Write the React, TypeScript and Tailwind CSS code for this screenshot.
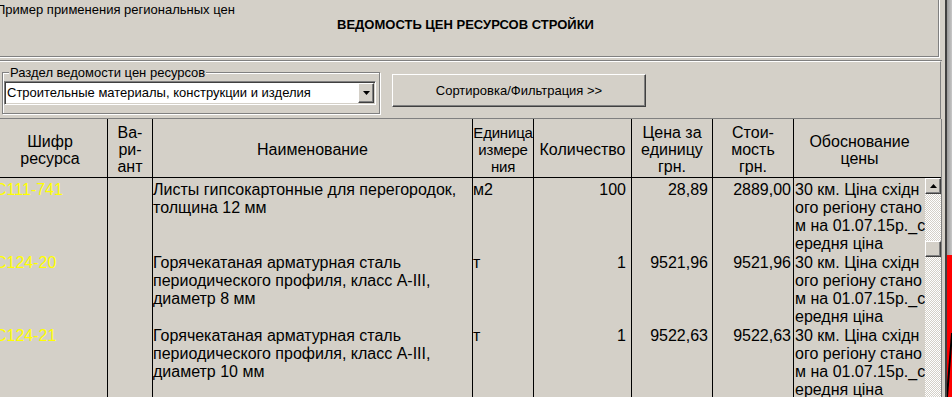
import React from 'react'

interface Row {
  code: string
  name: string[]
  unit: string
  qty: string
  price: string
  cost: string
}

const rows: Row[] = [
  {
    code: 'С111-741',
    name: ['Листы гипсокартонные для перегородок,', 'толщина 12 мм'],
    unit: 'м2',
    qty: '100',
    price: '28,89',
    cost: '2889,00',
  },
  {
    code: 'С124-20',
    name: ['Горячекатаная арматурная сталь', 'периодического профиля, класс А-III,', 'диаметр 8 мм'],
    unit: 'т',
    qty: '1',
    price: '9521,96',
    cost: '9521,96',
  },
  {
    code: 'С124-21',
    name: ['Горячекатаная арматурная сталь', 'периодического профиля, класс А-III,', 'диаметр 10 мм'],
    unit: 'т',
    qty: '1',
    price: '9522,63',
    cost: '9522,63',
  },
]

// price basis wraps mid-word in the original grid
const basis = ['30 км. Ціна східн', 'ого регіону стано', 'м на 01.07.15р._с', 'ередня ціна']

const Lines: React.FC<{ lines: string[] }> = ({ lines }) => (
  <>
    {lines.map((l, i) => (
      <div key={i} className="whitespace-nowrap">
        {l}
      </div>
    ))}
  </>
)

const raised =
  'border border-t-white border-l-white border-b-[#404040] border-r-[#404040] shadow-[inset_-1px_-1px_0_#808080]'

const App: React.FC = () => {
  return (
    <div className="w-[952px] h-[397px] overflow-hidden flex bg-[#d4d0c8] text-black font-['Liberation_Sans',Arial,sans-serif]">
      {/* main window */}
      <div className="w-[942px] flex flex-col">
        {/* header panel */}
        <div className="w-[940px] border-r border-b border-white">
          <div className="h-[57px] w-[939px] border-r border-b border-[#808080]">
            <div className="ml-[-4px] pt-[2px] text-[13px] leading-[15px] whitespace-nowrap">
              Пример применения региональных цен
            </div>
            <div className="pr-[7px] text-center text-[13px] leading-[15px] font-bold">
              ВЕДОМОСТЬ ЦЕН РЕСУРСОВ СТРОЙКИ
            </div>
          </div>
        </div>

        {/* filter panel */}
        <div className="mt-[2px] w-[942px] h-[59px] border-t border-[#808080]">
          <div className="h-[58px] border-t border-white border-r border-b border-r-[#808080] border-b-[#808080] w-[941px] flex items-start">
            {/* group box */}
            <div className="ml-[2px] mt-[10px] w-[378px] h-[42px] border border-[#808080] shadow-[inset_1px_1px_0_#fff,1px_1px_0_#fff] text-[13px] leading-[15px]">
              <div className="block w-fit mt-[-8px] ml-[6px] px-[1px] h-[15px] bg-[#d4d0c8] whitespace-nowrap">
                Раздел ведомости цен ресурсов
              </div>
              <div className="ml-[1px] mt-[1px] w-[372px] h-[24px] flex border border-t-[#808080] border-l-[#808080] border-b-white border-r-white shadow-[inset_1px_1px_0_#404040,inset_-1px_-1px_0_#d4d0c8] p-[1px]">
                <div className="flex-1 bg-white pl-[1px] pt-[2px] whitespace-nowrap overflow-hidden">
                  Строительные материалы, конструкции и изделия
                </div>
                <div className={`w-[16px] h-[20px] flex items-center justify-center bg-[#d4d0c8] ${raised}`}>
                  <svg width="7" height="4" viewBox="0 0 7 4">
                    <path d="M0 0h7L3.5 4z" fill="#000" />
                  </svg>
                </div>
              </div>
            </div>
            <div
              className={`ml-[12px] mt-[12px] w-[254px] h-[33px] flex items-center justify-center text-[13px] leading-[15px] ${raised}`}
            >
              Сортировка/Фильтрация &gt;&gt;
            </div>
          </div>
        </div>

        {/* grid */}
        <div className="flex-1 overflow-hidden">
          <div className="ml-[-8px] w-[950px] h-full border-r border-[#808080] flex flex-col">
            <div className="h-[61px] flex border-b border-black text-[16px] leading-[17px] text-center">
              <div className="w-[116px] border-r border-black flex flex-col items-center justify-center pt-[3px] pl-[1px]">
                <Lines lines={['Шифр', 'ресурса']} />
              </div>
              <div className="w-[45px] border-r border-black flex flex-col items-center justify-center pt-[3px]">
                <Lines lines={['Ва-', 'ри-', 'ант']} />
              </div>
              <div className="w-[320px] border-r border-black flex items-center justify-center pt-[3px]">
                Наименование
              </div>
              <div className="w-[61px] border-r border-black flex flex-col items-center justify-center pt-[3px] text-[15px] tracking-[-0.2px]">
                <Lines lines={['Единица', 'измере', 'ния']} />
              </div>
              <div className="w-[98px] border-r border-black flex items-center justify-center pt-[3px]">
                Количество
              </div>
              <div className="w-[81px] border-r border-black flex flex-col items-center justify-center pt-[3px]">
                <Lines lines={['Цена за', 'единицу', 'грн.']} />
              </div>
              <div className="w-[81px] border-r border-black flex flex-col items-center justify-center pt-[3px]">
                <Lines lines={['Стои-', 'мость', 'грн.']} />
              </div>
              <div className="flex-1 flex flex-col items-center justify-center pt-[3px] pr-[16px]">
                <Lines lines={['Обоснование', 'цены']} />
              </div>
            </div>

            <div className="flex-1 flex">
              <div className="w-[933px] text-[16px] leading-[18px]">
                {rows.map((r) => (
                  <div key={r.code} className="h-[73px] flex">
                    <div className="w-[116px] border-r border-black pt-[3px] pl-[3px] text-[#ffff00] whitespace-nowrap">
                      {r.code}
                    </div>
                    <div className="w-[45px] border-r border-black" />
                    <div className="w-[320px] border-r border-black pt-[3px]">
                      <Lines lines={r.name} />
                    </div>
                    <div className="w-[61px] border-r border-black pt-[3px]">{r.unit}</div>
                    <div className="w-[98px] border-r border-black pt-[3px] pr-[5px] text-right">{r.qty}</div>
                    <div className="w-[81px] border-r border-black pt-[3px] pr-[4px] text-right">{r.price}</div>
                    <div className="w-[81px] border-r border-black pt-[3px] pr-[2px] text-right">{r.cost}</div>
                    <div className="w-[131px] pt-[3px] pl-[1px]">
                      <Lines lines={basis} />
                    </div>
                  </div>
                ))}
              </div>

              {/* vertical scrollbar */}
              <div className="w-[16px] flex flex-col">
                <div className={`h-[16px] flex items-center justify-center bg-[#d4d0c8] ${raised}`}>
                  <svg width="7" height="4" viewBox="0 0 7 4">
                    <path d="M3.5 0L7 4H0z" fill="#000" />
                  </svg>
                </div>
                <div className="h-[47px] bg-[repeating-conic-gradient(#d4d0c8_0_25%,#ffffff_0_50%)] bg-[length:2px_2px]" />
                <div className={`h-[16px] bg-[#d4d0c8] ${raised}`} />
                <div className="flex-1 bg-[repeating-conic-gradient(#d4d0c8_0_25%,#ffffff_0_50%)] bg-[length:2px_2px]" />
              </div>
            </div>
          </div>
        </div>
      </div>

      {/* edge of the next window */}
      <div className="flex-1 flex">
        <div className="w-[3px] bg-[#d4d0c8]" />
        <div className="w-[2px] bg-[#404040]" />
        <div className="flex-1 flex flex-col">
          <div className="h-[255px] bg-gradient-to-r from-[#9a9a9a] to-[#c8c8c8]" />
          <div className="flex-1 bg-[#ff0000]">
            <svg width="5" height="142" viewBox="0 0 5 142">
              <path d="M0 142L5 78" stroke="#000" strokeWidth="2" />
            </svg>
          </div>
        </div>
      </div>
    </div>
  )
}

export default App
